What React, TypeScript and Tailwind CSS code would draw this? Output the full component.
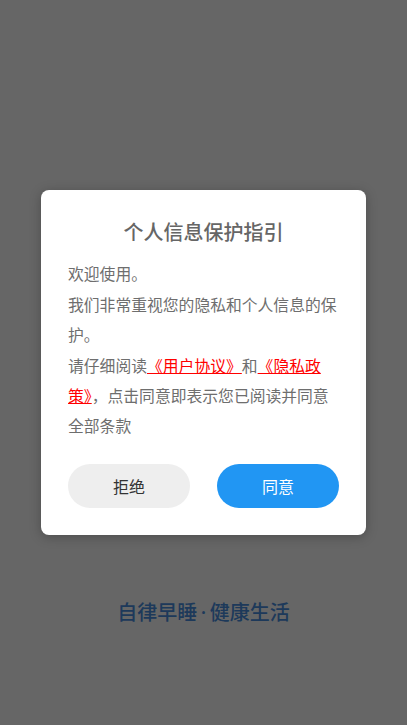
import React from 'react'

const font = { fontFamily: '"Noto Sans CJK SC", "Noto Sans", sans-serif' }
const sloganFont = { fontFamily: '"Noto Sans", "Noto Sans CJK SC", sans-serif' }

export default function App() {
  return (
    <div className="relative h-[725px] w-[407px] overflow-hidden bg-white" style={font}>
      {/* page behind the mask */}
      <div className="flex h-full flex-col items-center justify-end pb-[97px]">
        <div className="text-[20px] font-medium leading-[30px] text-[#4a90e2]" style={sloganFont}>
          自律早睡<span className="px-[3.5px]">·</span>健康生活
        </div>
      </div>

      {/* mask + dialog */}
      <div className="absolute inset-0 flex items-center justify-center bg-black/60">
        <div className="w-[325px] rounded-[8px] bg-white px-[27px] pb-[27px] pt-[27px] shadow-[0_2px_12px_rgba(0,0,0,0.25)]">
          <h2 className="text-center text-[20px] font-medium leading-[30px] text-[#666666]">个人信息保护指引</h2>
          <div className="mt-[12px] text-[15.8px] leading-[30.4px] text-[#6e6e6e]">
            <p>欢迎使用。</p>
            <p>我们非常重视您的隐私和个人信息的保护。</p>
            <p>
              请仔细阅读<span className="text-[#ff0000] underline">《用户协议》</span>和<span className="text-[#ff0000] underline">《隐私政策》</span>，点击同意即表示您已阅读并同意全部条款
            </p>
          </div>
          <div className="mt-[22px] flex justify-between">
            <button className="h-[44px] w-[122px] rounded-full bg-[#eeeeee] text-[16px] text-[#333333]">拒绝</button>
            <button className="h-[44px] w-[122px] rounded-full bg-[#2196f3] text-[16px] text-white">同意</button>
          </div>
        </div>
      </div>
    </div>
  )
}
